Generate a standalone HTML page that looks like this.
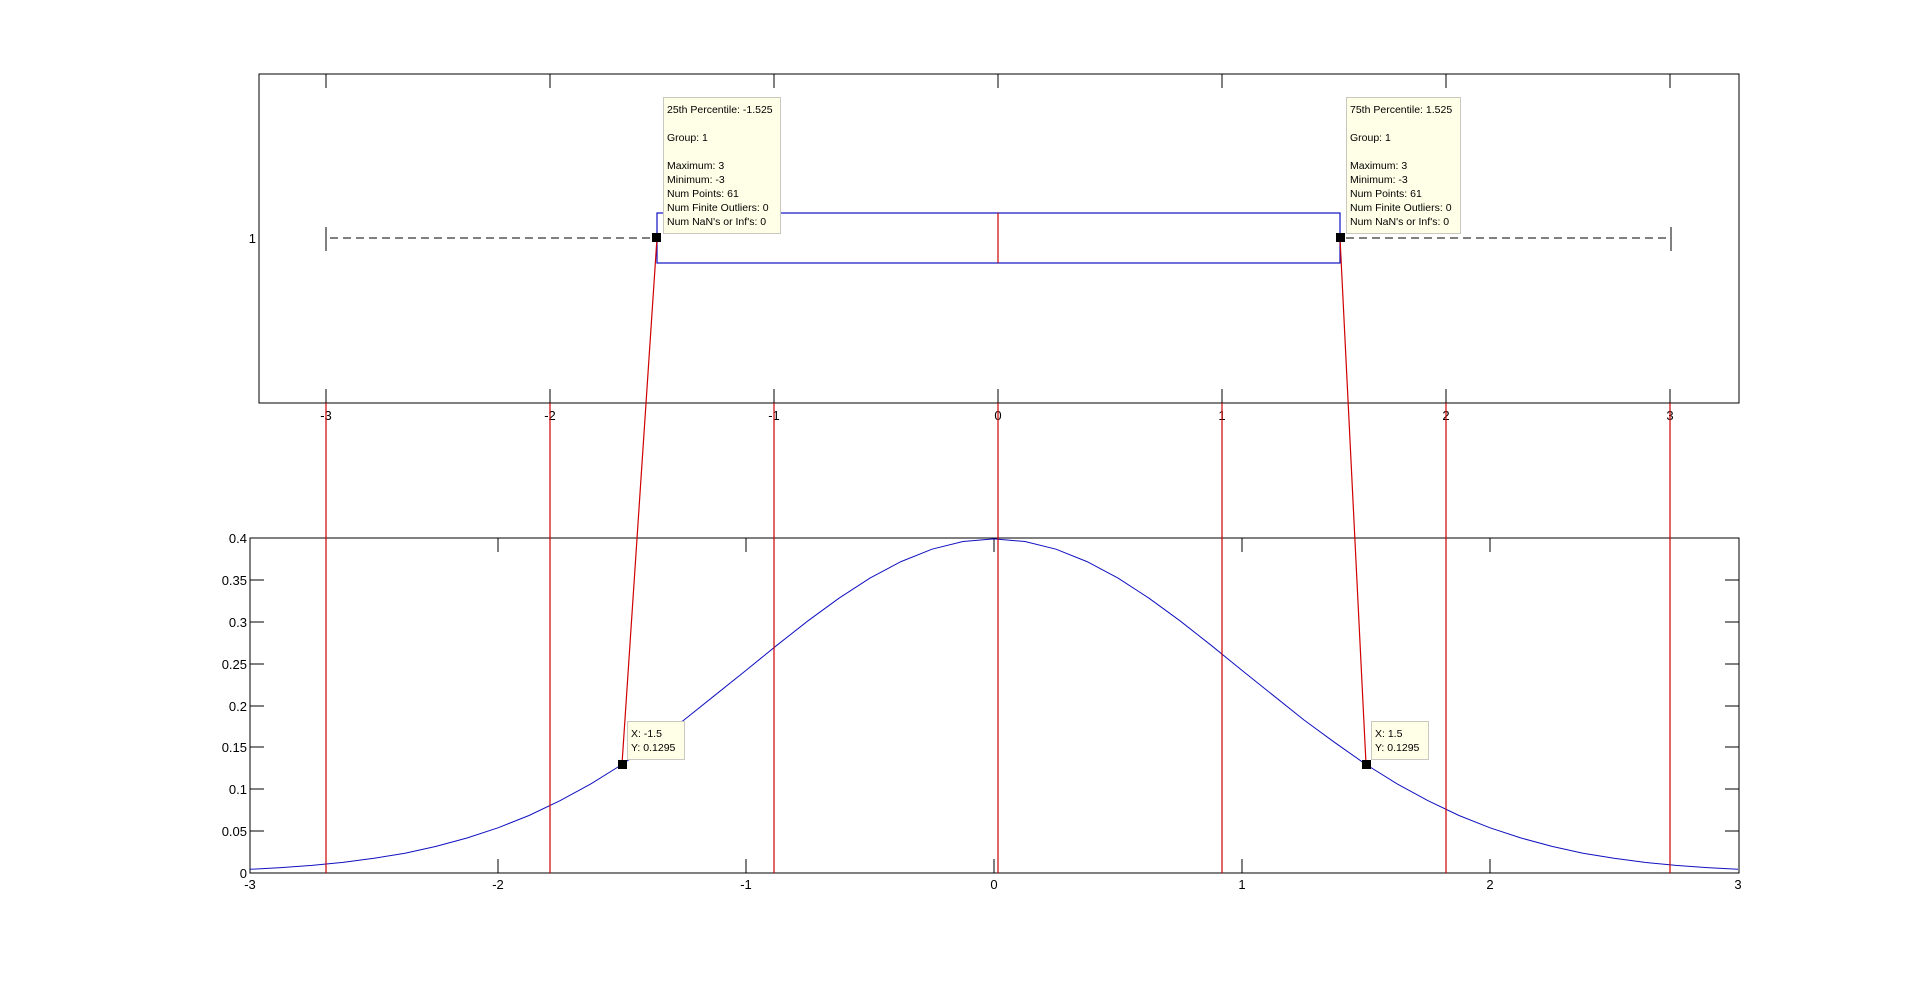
<!DOCTYPE html>
<html><head><meta charset="utf-8"><style>
html,body{margin:0;padding:0;background:#fff;}
svg{display:block}
text{font-family:"Liberation Sans",Arial,sans-serif;}
.t{font-size:13px;fill:#000}
.d{font-size:10.5px;fill:#000}
</style></head><body>
<svg width="1921" height="981" viewBox="0 0 1921 981" xmlns="http://www.w3.org/2000/svg">
<rect width="1921" height="981" fill="#fff"/>
<rect x="259" y="74" width="1480" height="329" fill="none" stroke="#000" stroke-width="1"/>
<g stroke="#000" stroke-width="1">
<path d="M326 74v14M550 74v14M774 74v14M998 74v14M1222 74v14M1446 74v14M1670 74v14"/>
<path d="M326 403v-14M550 403v-14M774 403v-14M998 403v-14M1222 403v-14M1446 403v-14M1670 403v-14"/>
<path d="M326 227v24M1671 227v24"/>
<path d="M330 238H657M1346 238H1671" stroke-dasharray="8,5"/>
</g>
<g class="t" text-anchor="middle">
<text x="326" y="420">-3</text><text x="550" y="420">-2</text><text x="774" y="420">-1</text><text x="998" y="420">0</text><text x="1222" y="420">1</text><text x="1446" y="420">2</text><text x="1670" y="420">3</text>
</g>
<text class="t" x="256" y="243" text-anchor="end">1</text>
<rect x="657" y="213" width="683" height="50" fill="none" stroke="#1010c0" stroke-width="1.2"/>
<path d="M998 213v50" stroke="#d00000" stroke-width="1.2"/>
<rect x="250" y="538" width="1489" height="335" fill="none" stroke="#000" stroke-width="1"/>
<g stroke="#000" stroke-width="1">
<path d="M498 538v14M746 538v14M994 538v14M1242 538v14M1490 538v14M498 873v-14M746 873v-14M994 873v-14M1242 873v-14M1490 873v-14"/>
<path d="M250 580h14M250 622h14M250 664h14M250 706h14M250 747h14M250 789h14M250 831h14"/>
<path d="M1739 580h-14M1739 622h-14M1739 664h-14M1739 706h-14M1739 747h-14M1739 789h-14M1739 831h-14"/>
</g>
<g class="t" text-anchor="end">
<text x="247" y="543">0.4</text><text x="247" y="585">0.35</text><text x="247" y="627">0.3</text><text x="247" y="669">0.25</text><text x="247" y="711">0.2</text><text x="247" y="752">0.15</text><text x="247" y="794">0.1</text><text x="247" y="836">0.05</text><text x="247" y="878">0</text>
</g>
<g class="t" text-anchor="middle">
<text x="250" y="889">-3</text><text x="498" y="889">-2</text><text x="746" y="889">-1</text><text x="994" y="889">0</text><text x="1242" y="889">1</text><text x="1490" y="889">2</text><text x="1738" y="889">3</text>
</g>
<polyline fill="none" stroke="#1010c0" stroke-width="1" points="250,869.3 281,867.6 312,865.4 343,862.4 374,858.3 405,853.2 436,846.4 467,838 498,827.8 529,815.5 560,800.7 591,783.8 622,764.5 653,742.7 684,720 715,695.2 746,670.4 777,645.2 808,620.8 839,598.2 870,578.1 901,561.6 932,549.2 963,541.5 994,538.9 1025,541.5 1056,549.2 1087,561.6 1118,578.1 1149,598.2 1180,620.8 1211,645.2 1242,670.4 1273,695.2 1304,720 1335,742.7 1366,764.5 1397,783.8 1428,800.7 1459,815.5 1490,827.8 1521,838 1552,846.4 1583,853.2 1614,858.3 1645,862.4 1676,865.4 1707,867.6 1738,869.3"/>
<g stroke="#d00000" stroke-width="1.2">
<path d="M326 403V873M550 403V873M774 403V873M998 403V873M1222 403V873M1446 403V873M1670 403V873"/>
<path d="M657 238L622 764M1340 238L1366 764"/>
</g>
<g fill="#000">
<rect x="652" y="233" width="9" height="9"/><rect x="1336" y="233" width="9" height="9"/>
<rect x="618" y="760" width="9" height="9"/><rect x="1362" y="760" width="9" height="9"/>
</g>
<g fill="#ffffe8" stroke="#c8c8c0" stroke-width="1">
<rect x="663.5" y="97.5" width="117" height="136"/>
<rect x="1346.5" y="97.5" width="114" height="136"/>
<rect x="627.5" y="721.5" width="57" height="38"/>
<rect x="1371.5" y="721.5" width="57" height="38"/>
</g>
<g class="d">
<text x="667" y="113">25th Percentile: -1.525</text><text x="667" y="141">Group: 1</text><text x="667" y="169">Maximum: 3</text><text x="667" y="183">Minimum: -3</text><text x="667" y="197">Num Points: 61</text><text x="667" y="211">Num Finite Outliers: 0</text><text x="667" y="225">Num NaN's or Inf's: 0</text>
<text x="1350" y="113">75th Percentile: 1.525</text><text x="1350" y="141">Group: 1</text><text x="1350" y="169">Maximum: 3</text><text x="1350" y="183">Minimum: -3</text><text x="1350" y="197">Num Points: 61</text><text x="1350" y="211">Num Finite Outliers: 0</text><text x="1350" y="225">Num NaN's or Inf's: 0</text>
<text x="631" y="737">X: -1.5</text><text x="631" y="751">Y: 0.1295</text>
<text x="1375" y="737">X: 1.5</text><text x="1375" y="751">Y: 0.1295</text>
</g>
</svg>
</body></html>
